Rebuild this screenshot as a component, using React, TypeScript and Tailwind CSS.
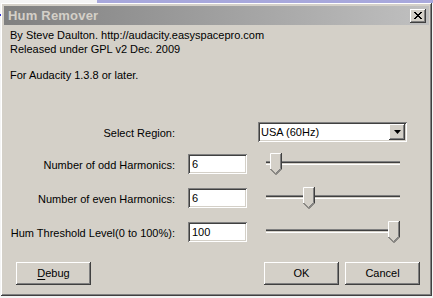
import React from "react";

const FONT = { fontFamily: '"Liberation Sans", Arial, sans-serif' };

// raised 3d edge, Windows classic style
const RAISED =
  "shadow-[inset_-1px_-1px_0_#404040,inset_1px_1px_0_#ffffff,inset_-2px_-2px_0_#808080,inset_2px_2px_0_#d4d0c8]";
const SUNKEN =
  "shadow-[inset_1px_1px_0_#808080,inset_-1px_-1px_0_#ffffff,inset_2px_2px_0_#404040,inset_-2px_-2px_0_#d4d0c8]";

function Field({ value }: { value: string }) {
  return (
    <div className={`w-[59px] h-[20px] bg-white ${SUNKEN} flex items-center pl-[4px] text-[11px] text-black`}>
      {value}
    </div>
  );
}

function Thumb() {
  return (
    <svg width="12" height="22" viewBox="0 0 12 22" className="block">
      <path d="M0.5 16 V0.5 H11.5 V16 L6 21.5 Z" fill="#d4d0c8" />
      <path d="M0.5 16 V0.5 H10.5" stroke="#ffffff" fill="none" />
      <path d="M11.5 0 V16 L6 21.5 L0.5 16" stroke="#404040" fill="none" />
      <path d="M10.5 1 V15.5 L6 20" stroke="#808080" fill="none" />
    </svg>
  );
}

function Slider({ pos }: { pos: number }) {
  return (
    <div className="relative w-[142px] h-[22px]">
      <div className="absolute left-[4px] right-[4px] top-[8px] h-[4px] border-t border-t-[#808080] border-b border-b-white bg-[#404040] shadow-[inset_0_-1px_0_#d4d0c8]" />
      <div className="absolute top-0" style={{ left: pos }}>
        <Thumb />
      </div>
    </div>
  );
}

function Button({ children }: { children: React.ReactNode }) {
  return (
    <div
      className={`w-[75px] h-[23px] bg-[#d4d0c8] ${RAISED} flex items-center justify-center text-[11px] text-black`}
    >
      {children}
    </div>
  );
}

function Row({ label, children }: { label: string; children: React.ReactNode }) {
  return (
    <div className="flex items-center h-[20px]">
      <div className="w-[171px] text-right text-[11px] text-black pt-[2px]">{label}</div>
      <div className="ml-[13px] flex items-center">{children}</div>
    </div>
  );
}

export default function App() {
  return (
    <div className="w-[433px] h-[298px] bg-[#f4f4f4] overflow-hidden relative" style={FONT}>
      {/* bit of the window behind */}
      <div className="absolute left-[97px] top-0 w-[336px] h-[3px] bg-[#a8a8dc]" />
      <div className="absolute left-0 top-[14px] w-[3px] h-[2px] bg-[#3030d0]" />

      <div
        className={`absolute left-[1px] top-[3px] w-[431px] h-[293px] bg-[#d4d0c8] ${RAISED} p-[3px] flex flex-col`}
      >
        {/* title bar */}
        <div className="h-[19px] flex items-center justify-between pl-[4px] pr-[3px] bg-gradient-to-r from-[#808080] to-[#c0c0c0]">
          <span className="text-[13px] font-bold text-[#d4d0c8] tracking-[0.2px]">Hum Remover</span>
          <div className={`w-[16px] h-[14px] bg-[#d4d0c8] ${RAISED} flex items-center justify-center`}>
            <svg width="8" height="7" viewBox="0 0 8 7">
              <path d="M0 0 L7 7 M1 0 L8 7 M7 0 L0 7 M8 0 L1 7" stroke="#000" strokeWidth="1" />
            </svg>
          </div>
        </div>

        {/* header text */}
        <div className="pl-[6px] pt-[3px] text-[11px] leading-[14px] text-black">
          <div>By Steve Daulton. http://audacity.easyspacepro.com</div>
          <div>Released under GPL v2 Dec. 2009</div>
          <div className="mt-[12px]">For Audacity 1.3.8 or later.</div>
        </div>

        {/* form */}
        <div className="mt-[40px] flex flex-col">
          <div className="flex items-center h-[20px]">
            <div className="w-[171px] text-right text-[11px] text-black pt-[2px]">Select Region:</div>
            <div className={`ml-[83px] w-[149px] h-[20px] bg-white ${SUNKEN} flex items-center justify-between pl-[3px] pr-[2px]`}>
              <span className="text-[11px] text-black">USA (60Hz)</span>
              <div className={`w-[16px] h-[16px] bg-[#d4d0c8] ${RAISED} flex items-center justify-center`}>
                <svg width="7" height="4" viewBox="0 0 7 4">
                  <path d="M0 0 H7 L3.5 4 Z" fill="#000" />
                </svg>
              </div>
            </div>
          </div>

          <div className="mt-[12px] flex flex-col gap-[14px]">
            <Row label="Number of odd Harmonics:">
              <Field value="6" />
              <div className="ml-[15px]">
                <Slider pos={8} />
              </div>
            </Row>
            <Row label="Number of even Harmonics:">
              <Field value="6" />
              <div className="ml-[15px]">
                <Slider pos={41} />
              </div>
            </Row>
            <Row label="Hum Threshold Level(0 to 100%):">
              <Field value="100" />
              <div className="ml-[15px]">
                <Slider pos={126} />
              </div>
            </Row>
          </div>
        </div>

        {/* buttons */}
        <div className="mt-[20px] flex items-center pl-[12px] pr-[9px]">
          <Button>
            <span>
              <span className="underline underline-offset-2">D</span>ebug
            </span>
          </Button>
          <div className="ml-auto flex gap-[6px]">
            <Button>OK</Button>
            <Button>Cancel</Button>
          </div>
        </div>
      </div>
    </div>
  );
}
